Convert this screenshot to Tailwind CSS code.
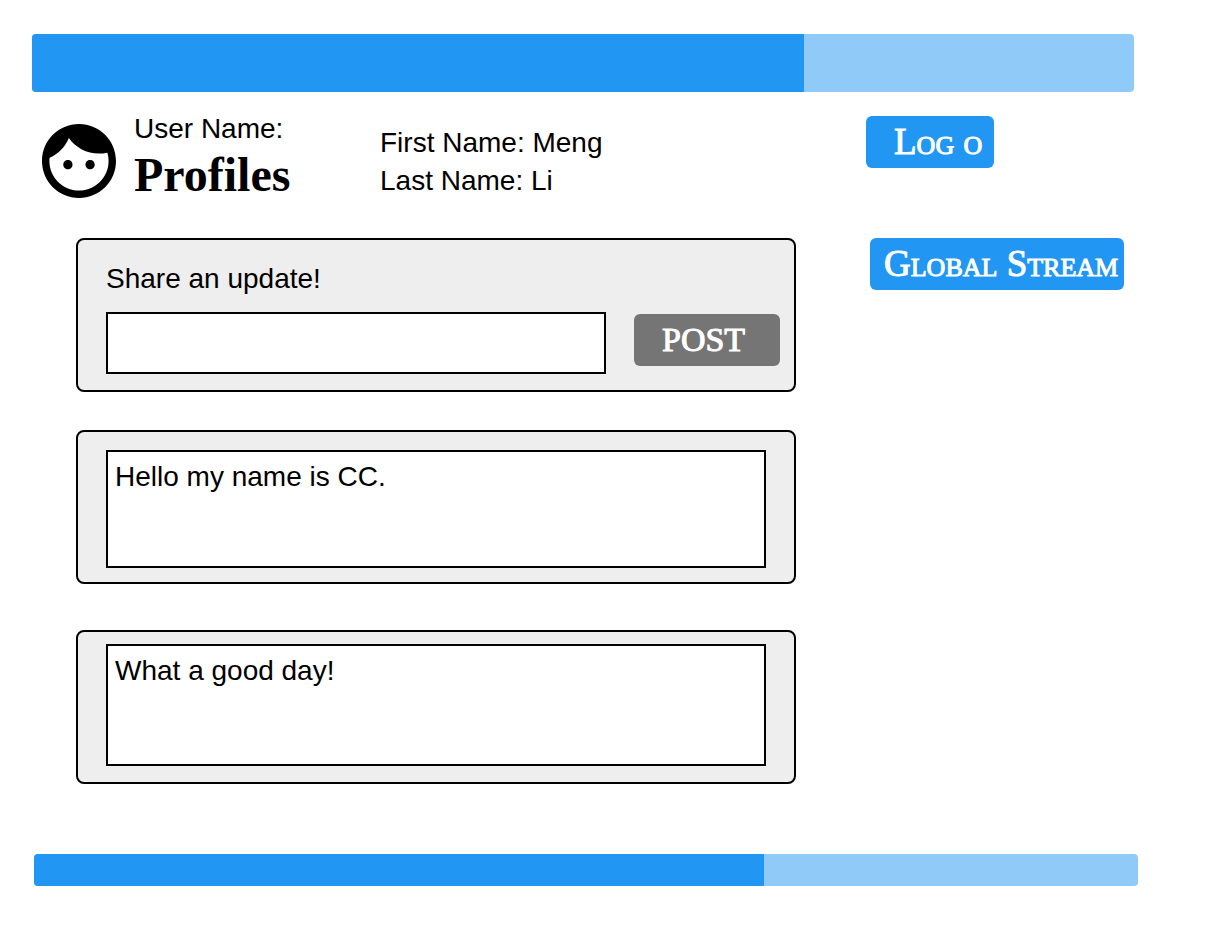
<!DOCTYPE html>
<html lang="en">
<head>
<meta charset="utf-8">
<meta name="viewport" content="width=device-width, initial-scale=1">
<title>Profiles</title>
<script src="https://cdn.jsdelivr.net/npm/@tailwindcss/browser@4"></script>
</head>
<body class="bg-white pb-16 font-['Liberation_Sans',Arial,sans-serif] text-[28px] leading-[34px] text-black">
  <header class="pt-[34px]">
    <div class="mr-[74px] ml-8 h-[58px] overflow-hidden rounded-[4px] bg-[#90caf9]">
      <div class="h-full bg-[#2196f3]" style="width: 70.05%"></div>
    </div>
    <div class="flex items-start pt-5">
      <div class="flex min-w-0 flex-1 pl-[42px]">
        <svg class="mt-3 size-[74px] shrink-0" viewBox="2 2 20 20" fill="currentColor" aria-hidden="true">
          <path d="M9 11.75c-.69 0-1.25.56-1.25 1.25s.56 1.25 1.25 1.25 1.25-.56 1.25-1.25-.56-1.25-1.25-1.25zm6 0c-.69 0-1.25.56-1.25 1.25s.56 1.25 1.25 1.25 1.25-.56 1.25-1.25-.56-1.25-1.25-1.25zM12 2C6.48 2 2 6.48 2 12s4.48 10 10 10 10-4.48 10-10S17.52 2 12 2zm0 18c-4.41 0-8-3.59-8-8 0-.29.02-.58.05-.86 2.36-1.05 4.23-2.98 5.21-5.37C11.07 8.33 14.05 10 17.42 10c.78 0 1.53-.09 2.25-.26.21.71.33 1.47.33 2.26 0 4.41-3.59 8-8 8z"/>
        </svg>
        <div class="w-[264px] shrink-0 pl-[18px]">
          <p>User Name:</p>
          <h1 class="pb-1 font-['Liberation_Serif',serif] text-[48px] leading-[58px] font-bold">Profiles</h1>
        </div>
        <div class="pt-3 leading-[38px] whitespace-nowrap">
          <p>First Name: Meng</p>
          <p>Last Name: Li</p>
        </div>
      </div>
      <div class="w-[412px] shrink-0 pt-1 pl-[70px]">
        <button type="button" aria-label="Log out" class="block h-[52px] w-32 rounded-md bg-[#2196f3] pl-7 text-left font-['Liberation_Serif',serif] text-[37px] leading-[52px] whitespace-nowrap text-white [font-variant-caps:small-caps] [-webkit-text-stroke:1px_white]">Log o</button>
      </div>
    </div>
  </header>

  <main class="flex items-start pt-[30px]">
    <div class="min-w-0 flex-1 pl-[76px]">
      <form class="rounded-lg border-2 border-black bg-[#eee] pt-[22px] pr-3.5 pb-4 pl-7">
        <label for="update" class="block">Share an update!</label>
        <div class="flex items-start gap-7 pt-4">
          <input id="update" type="text" class="h-[62px] min-w-0 flex-1 border-2 border-black bg-white px-2">
          <button type="button" class="mt-0.5 h-[52px] w-[146px] shrink-0 rounded-md bg-[#757575] pl-7 text-left font-['Liberation_Serif',serif] text-[34px] leading-[52px] text-white [-webkit-text-stroke:1px_white]">POST</button>
        </div>
      </form>
      <article class="mt-[38px] rounded-lg border-2 border-black bg-[#eee] px-7 pt-[18px] pb-3.5">
        <p class="min-h-[118px] border-2 border-black bg-white px-[7px] pt-2">Hello my name is CC.</p>
      </article>
      <article class="mt-[46px] rounded-lg border-2 border-black bg-[#eee] px-7 pt-3 pb-4">
        <p class="min-h-[122px] border-2 border-black bg-white px-[7px] pt-2">What a good day!</p>
      </article>
    </div>
    <nav class="w-[412px] shrink-0 pl-[74px]">
      <button type="button" class="block h-[52px] w-[254px] rounded-md bg-[#2196f3] pl-3.5 text-left font-['Liberation_Serif',serif] text-[37px] leading-[52px] whitespace-nowrap text-white [font-variant-caps:small-caps] [-webkit-text-stroke:1px_white]">Global Stream</button>
    </nav>
  </main>

  <footer class="pt-[70px]">
    <div class="mr-[70px] ml-[34px] h-8 overflow-hidden rounded-[4px] bg-[#90caf9]">
      <div class="h-full bg-[#2196f3]" style="width: 66.1%"></div>
    </div>
  </footer>
</body>
</html>
